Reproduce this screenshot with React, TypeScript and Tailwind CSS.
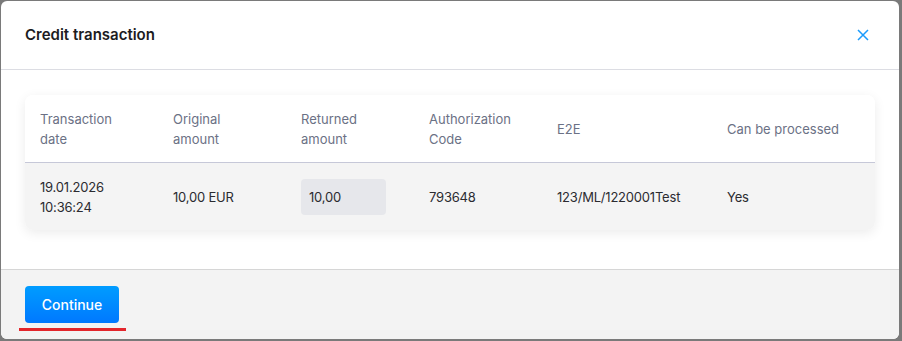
import React from 'react'

const columns = [
  { label: 'Transaction date', width: 'w-[133px]' },
  { label: 'Original amount', width: 'w-[128px]' },
  { label: 'Returned amount', width: 'w-[128px]' },
  { label: 'Authorization Code', width: 'w-[128px]' },
  { label: 'E2E', width: 'w-[170px]' },
  { label: 'Can be processed', width: 'flex-1' },
]

export default function App() {
  return (
    <div className="w-[902px] h-[341px] bg-[#7a7a7a] pl-px pt-px pr-[3px] pb-[2px] font-['Inter',sans-serif]">
      <div className="h-full flex flex-col bg-white rounded-md overflow-hidden">
        {/* Header */}
        <div className="h-[69px] shrink-0 flex items-center justify-between pl-6 pr-[30px] border-b border-[#dcdde3]">
          <h2 className="text-[15px] font-semibold text-[#1c1c22]">Credit transaction</h2>
          <button className="text-[#1a9bfc]" title="Close">
            <svg width="12" height="12" viewBox="0 0 12 12" fill="none" stroke="currentColor" strokeWidth="1.5">
              <path d="M1 1L11 11M11 1L1 11" />
            </svg>
          </button>
        </div>

        {/* Body */}
        <div className="flex-1 px-6 pt-[25px]">
          <div className="rounded-lg shadow-[0_3px_12px_rgba(0,0,0,0.08)] overflow-hidden">
            <div className="flex h-[68px] items-center border-b border-[#c6c8d8] bg-white text-[13px] leading-5 text-[#6b7185]">
              {columns.map((c) => (
                <div key={c.label} className={`${c.width} pl-[15px] pr-4`}>
                  {c.label}
                </div>
              ))}
            </div>
            <div className="flex h-[67px] items-center bg-[#f4f4f4] text-[13px] leading-5 text-[#2b2b30] tracking-[-0.2px]">
              <div className="w-[133px] pl-[15px]">
                19.01.2026
                <br />
                10:36:24
              </div>
              <div className="w-[128px] pl-[15px]">10,00 EUR</div>
              <div className="w-[128px] pl-[15px]">
                <input
                  defaultValue="10,00"
                  className="w-[85px] h-9 rounded bg-[#e6e7eb] px-2 text-[13px] text-[#2b2b30] outline-none"
                />
              </div>
              <div className="w-[128px] pl-[15px]">793648</div>
              <div className="w-[170px] pl-[15px]">123/ML/1220001Test</div>
              <div className="flex-1 pl-[15px]">Yes</div>
            </div>
          </div>
        </div>

        {/* Footer */}
        <div className="h-[70px] shrink-0 bg-[#f3f3f3] border-t border-[#d6d6d6] pl-6 pt-4">
          <div className="inline-flex flex-col items-center">
            <button className="w-[94px] h-[37px] rounded bg-gradient-to-b from-[#009cff] to-[#0078ff] text-white text-[14px] font-medium">
              Continue
            </button>
            <div className="mt-[5px] -mx-[7px] w-[107px] h-[3px] bg-[#e3262c]" />
          </div>
        </div>
      </div>
    </div>
  )
}
